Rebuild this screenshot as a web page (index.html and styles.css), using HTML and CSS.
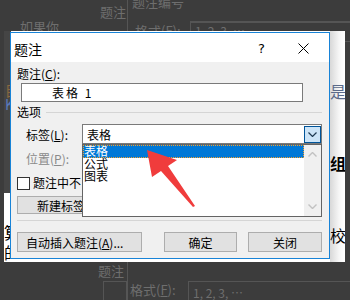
FILE: index.html
```html
<!DOCTYPE html>
<html lang="zh-CN">
<head>
  <meta charset="UTF-8" />
  <title>题注</title>
  <link rel="stylesheet" href="styles.css">
</head>
<body>
  <div class="screen">
    <!-- dimmed window behind -->
    <div class="dim-text t1">题注</div>
    <div class="dim-text t2">题注编号</div>
    <div class="dim-text t3">如果你</div>
    <div class="dim-text t4">格式(F):</div>
    <div class="dim-box b1">1, 2, 3, …</div>
    <div class="dim-text t5">题注</div>
    <div class="dim-box b2"></div>
    <div class="dim-text t6">格式(<u>F</u>):</div>
    <div class="dim-box b3">1, 2, 3, …</div>
    <div class="dim-rule r1"></div>
    <div class="dim-rule r2"></div>
    <div class="dim-rule r3"></div>

    <!-- bright document area round the dialog -->
    <div class="doc">
      <div class="doc-left">
        <span class="tint">目</span>
        <span class="tint k">K</span>
        <div class="doc-left-page">
          <span>算</span>
          <span>的</span>
        </div>
      </div>
      <div class="doc-right">
        <span class="light">是</span>
        <span class="bold">组算</span>
        <span>校</span>
      </div>
    </div>

    <div class="dialog">
      <div class="titlebar">
        <span class="title">题注</span>
        <span class="help">?</span>
        <span class="close">
          <svg width="11" height="11" viewBox="0 0 11 11"><path d="M0.5 0.5L10.5 10.5M10.5 0.5L0.5 10.5" stroke="#000" stroke-width="1"/></svg>
        </span>
      </div>
      <div class="content">
        <div class="label-row">题注(<u>C</u>):</div>
        <div class="caption-input"><span>表格 1</span></div>
        <div class="group-head"><span>选项</span><i class="rule"></i></div>
        <div class="field-row">
          <span class="field-label">标签(<u>L</u>):</span>
          <div class="combo">
            <span>表格</span>
            <span class="combo-btn">
              <svg width="9" height="5" viewBox="0 0 9 5"><path d="M0.5 0.5L4.5 4.5L8.5 0.5" fill="none" stroke="#1e3a52" stroke-width="1.2"/></svg>
            </span>
          </div>
        </div>
        <div class="field-row pos">
          <span class="field-label disabled">位置(<u>P</u>):</span>
        </div>
        <div class="behind-list">
          <div class="check-row"><span class="box"></span>题注中不</div>
          <div class="btn-row"><span class="btn new-label">新建标签</span></div>
        </div>
        <div class="sep"></div>
        <div class="bottom-buttons">
          <span class="btn auto">自动插入题注(<u>A</u>)...</span>
          <span class="btn ok">确定</span>
          <span class="btn cancel">关闭</span>
        </div>
      </div>

      <div class="dropdown">
        <ul class="items">
          <li class="selected">表格</li>
          <li>公式</li>
          <li>图表</li>
        </ul>
        <div class="scrollbar">
          <svg width="9" height="5" viewBox="0 0 9 5"><path d="M0.5 4.5L4.5 0.5L8.5 4.5" fill="none" stroke="#c2c2c2" stroke-width="1.4"/></svg>
          <svg width="9" height="5" viewBox="0 0 9 5"><path d="M0.5 0.5L4.5 4.5L8.5 0.5" fill="none" stroke="#c2c2c2" stroke-width="1.4"/></svg>
        </div>
      </div>
    </div>

    <svg class="arrow" width="350" height="300" viewBox="0 0 350 300">
      <polygon points="147,150 177,160 168,166 195,206 193,207 161,171 152,177" fill="#f03c3c"/>
    </svg>
  </div>
</body>
</html>
```

FILE: styles.css
```css
* {
  box-sizing: border-box;
}
body {
  margin: 0;
  background-color: #3c3c3c;
  font-family: "Noto Sans CJK SC", "DejaVu Sans", sans-serif;
  font-size: 12px;
  color: #000;
}
u {
  text-decoration: underline;
  text-underline-offset: 1px;
}
.screen {
  position: relative;
  width: 350px;
  height: 300px;
  overflow: hidden;
}

/* dimmed background */
.dim-text {
  position: absolute;
  color: #6e6e6e;
  font-size: 13px;
  line-height: 14px;
  white-space: nowrap;
}
.t1 { left: 100px; top: 5px; }
.t2 { left: 132px; top: -5px; }
.t3 { left: 20px; top: 20px; }
.t4 { left: 135px; top: 24px; }
.t5 { left: 98px; top: 264px; }
.t6 { left: 130px; top: 283px; }
.dim-box {
  position: absolute;
  border: 1px solid #555;
  color: #6e6e6e;
  font-size: 12px;
  line-height: 16px;
  padding-left: 4px;
  white-space: nowrap;
}
.b1 { left: 190px; top: 22px; width: 170px; height: 20px; }
.b2 { left: 103px; top: 281px; width: 24px; height: 24px; }
.b3 { left: 188px; top: 281px; width: 170px; height: 24px; padding-top: 3px; }
.dim-rule {
  position: absolute;
  background: #555;
}
.r1 { left: 190px; top: 21px; width: 160px; height: 1px; }
.r2 { left: 127px; top: 0; width: 1px; height: 31px; }
.r3 { left: 127px; top: 262px; width: 1px; height: 38px; }

/* bright region */
.doc {
  position: absolute;
  left: 4px;
  top: 31px;
  width: 341px;
  height: 231px;
  background: #fff;
  display: flex;
  justify-content: space-between;
}
.doc-left {
  width: 7px;
  display: flex;
  flex-direction: column;
  padding-top: 52px;
  background: #454545;
  font-size: 14px;
  line-height: 14px;
  overflow: hidden;
}
.doc-left .tint {
  color: #8a6a40;
  margin-left: 1px;
}
.doc-left .k {
  color: #5a78b8;
}
.doc-left-page {
  margin-top: auto;
  height: 69px;
  background: #fff;
  display: flex;
  flex-direction: column;
  justify-content: flex-end;
  gap: 4px;
  padding-bottom: 2px;
  font-size: 16px;
  line-height: 16px;
}
.doc-right {
  width: 15px;
  display: flex;
  flex-direction: column;
  padding-top: 52px;
  gap: 56px;
  font-size: 16px;
  line-height: 16px;
  overflow: hidden;
  background: linear-gradient(to right, #d8d8d8, #f6f6f6 60%, #fff);
}
.doc-right span {
  white-space: nowrap;
}
.doc-right .light {
  color: #5a6a8a;
}
.doc-right .bold {
  font-weight: bold;
}

/* dialog */
.dialog {
  position: absolute;
  left: 10px;
  top: 32px;
  width: 320px;
  height: 227px;
  border: 1px solid #1883d7;
  background: #f0f0f0;
}
.titlebar {
  height: 29px;
  background: #fff;
  display: flex;
  align-items: center;
  padding-left: 3px;
  padding-top: 2px;
}
.title {
  flex: 1;
  font-size: 14px;
}
.help {
  width: 45px;
  font-family: "DejaVu Sans", sans-serif;
  font-size: 13px;
  text-align: center;
}
.close {
  width: 45px;
  display: flex;
  justify-content: center;
  padding-right: 6px;
}
.content {
  padding: 4px 7px 6px 6px;
}
.label-row {
  height: 16px;
  line-height: 16px;
}
.caption-input {
  margin: 1px 19px 0 4px;
  height: 19px;
  border: 1px solid #7a7a7a;
  background: #fff;
  line-height: 17px;
  padding-left: 30px;
  letter-spacing: 2px;
}
.group-head {
  margin-top: 2px;
  height: 16px;
  display: flex;
  align-items: center;
  gap: 5px;
  line-height: 16px;
}
.rule {
  flex: 1;
  height: 1px;
  background: #d5d5d5;
}
.field-row {
  margin-top: 4px;
  height: 20px;
  display: flex;
  align-items: center;
  padding-left: 9px;
}
.field-row.pos {
  margin-top: 6px;
  height: 16px;
}
.field-label {
  width: 56px;
}
.disabled {
  color: #8a8a8a;
}
.combo {
  flex: 1;
  height: 20px;
  border: 1px solid #7a7a7a;
  background: #fff;
  display: flex;
  align-items: center;
  justify-content: space-between;
  padding: 1px 0 1px 4px;
}
.combo-btn {
  width: 17px;
  height: 17px;
  background: #cce4f7;
  border: 1px solid #005499;
  display: flex;
  align-items: center;
  justify-content: center;
}
/* the part of the form that the open list covers */
.behind-list {
  width: 65px;
  overflow: hidden;
}
.check-row {
  margin-top: 10px;
  height: 14px;
  display: flex;
  align-items: center;
  gap: 3px;
  line-height: 14px;
  white-space: nowrap;
}
.box {
  flex: none;
  width: 13px;
  height: 13px;
  border: 1px solid #333;
  background: #fff;
}
.btn-row {
  margin-top: 6px;
  height: 18px;
}
.btn {
  display: inline-flex;
  align-items: center;
  justify-content: center;
  height: 100%;
  background: #e1e1e1;
  border: 1px solid #adadad;
  white-space: nowrap;
}
.new-label {
  width: 112px;
  justify-content: flex-start;
  padding-left: 19px;
}
.sep {
  margin-top: 6px;
  height: 1px;
  background: #d5d5d5;
}
.bottom-buttons {
  margin-top: 11px;
  height: 20px;
  display: flex;
}
.auto {
  width: 125px;
  justify-content: flex-start;
  padding-left: 8px;
}
.ok {
  width: 73px;
  margin-left: 22px;
}
.cancel {
  width: 74px;
  margin-left: 11px;
}

/* open list of the combo */
.dropdown {
  position: absolute;
  left: 71px;
  top: 111px;
  width: 240px;
  height: 73px;
  border: 1px solid #646464;
  background: #fff;
  display: flex;
}
.items {
  flex: 1;
  list-style: none;
  margin: 0;
  padding: 0;
}
.items li {
  height: 12px;
  line-height: 12px;
  padding-left: 1px;
}
.items li.selected {
  height: 13px;
  background: #0078d7;
  color: #fff;
  outline: 1px dotted #f0a030;
  outline-offset: -1px;
}
.scrollbar {
  width: 17px;
  background: #f0f0f0;
  display: flex;
  flex-direction: column;
  justify-content: space-between;
  align-items: center;
  padding: 7px 0 7px;
}

.arrow {
  position: absolute;
  left: 0;
  top: 0;
}
```
